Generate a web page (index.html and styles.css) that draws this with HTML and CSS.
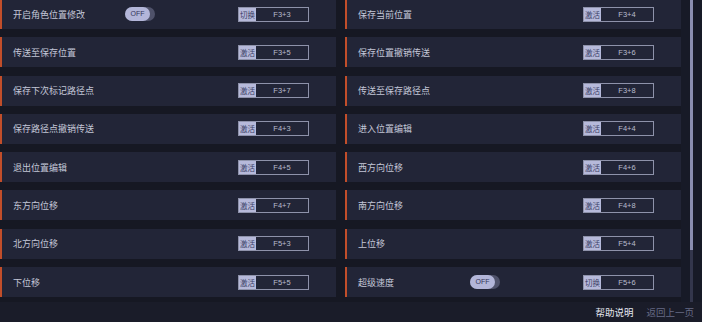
FILE: index.html
```html
<!DOCTYPE html>
<html lang="zh">
<head>
<meta charset="utf-8">
<link rel="stylesheet" href="styles.css">
</head>
<body>
<div class="screen">
  <div class="viewport">
    <div class="list">
      <div class="card"><span class="label">开启角色位置修改</span><span class="toggle"><span class="toggle-on">OFF</span></span><span class="key"><span class="key-act">切换</span><span class="key-code">F3+3</span></span></div>
      <div class="card"><span class="label">保存当前位置</span><span class="key"><span class="key-act">激活</span><span class="key-code">F3+4</span></span></div>
      <div class="card"><span class="label">传送至保存位置</span><span class="key"><span class="key-act">激活</span><span class="key-code">F3+5</span></span></div>
      <div class="card"><span class="label">保存位置撤销传送</span><span class="key"><span class="key-act">激活</span><span class="key-code">F3+6</span></span></div>
      <div class="card"><span class="label">保存下次标记路径点</span><span class="key"><span class="key-act">激活</span><span class="key-code">F3+7</span></span></div>
      <div class="card"><span class="label">传送至保存路径点</span><span class="key"><span class="key-act">激活</span><span class="key-code">F3+8</span></span></div>
      <div class="card"><span class="label">保存路径点撤销传送</span><span class="key"><span class="key-act">激活</span><span class="key-code">F4+3</span></span></div>
      <div class="card"><span class="label">进入位置编辑</span><span class="key"><span class="key-act">激活</span><span class="key-code">F4+4</span></span></div>
      <div class="card"><span class="label">退出位置编辑</span><span class="key"><span class="key-act">激活</span><span class="key-code">F4+5</span></span></div>
      <div class="card"><span class="label">西方向位移</span><span class="key"><span class="key-act">激活</span><span class="key-code">F4+6</span></span></div>
      <div class="card"><span class="label">东方向位移</span><span class="key"><span class="key-act">激活</span><span class="key-code">F4+7</span></span></div>
      <div class="card"><span class="label">南方向位移</span><span class="key"><span class="key-act">激活</span><span class="key-code">F4+8</span></span></div>
      <div class="card"><span class="label">北方向位移</span><span class="key"><span class="key-act">激活</span><span class="key-code">F5+3</span></span></div>
      <div class="card"><span class="label">上位移</span><span class="key"><span class="key-act">激活</span><span class="key-code">F5+4</span></span></div>
      <div class="card"><span class="label">下位移</span><span class="key"><span class="key-act">激活</span><span class="key-code">F5+5</span></span></div>
      <div class="card"><span class="label">超级速度</span><span class="toggle"><span class="toggle-on">OFF</span></span><span class="key"><span class="key-act">切换</span><span class="key-code">F5+6</span></span></div>
    </div>
    <div class="scrollbar"><div class="thumb"></div></div>
  </div>
  <div class="footer">
    <span class="help">帮助说明</span>
    <span class="back">返回上一页</span>
  </div>
</div>
</body>
</html>
```
FILE: styles.css
```css
html, body {
  margin: 0;
  padding: 0;
  background: #1a1c29;
}
body {
  width: 702px;
  height: 322px;
  overflow: hidden;
  font-family: "Noto Sans CJK SC", "Noto Sans", sans-serif;
}
.screen {
  display: flex;
  flex-direction: column;
  height: 322px;
}
.viewport {
  display: flex;
  height: 302px;
  overflow: hidden;
}
.list {
  display: grid;
  grid-template-columns: 336px 336px;
  grid-auto-rows: 30px;
  column-gap: 9px;
  row-gap: 8.3px;
  margin-top: -1px;
  width: 681px;
  background: #161823;
  align-content: start;
}
.card {
  display: flex;
  align-items: center;
  background: #222537;
  border-left: 2px solid #c24e2a;
  padding-left: 11px;
  padding-right: 27px;
  box-sizing: border-box;
  height: 30px;
}
.label {
  flex: 0 0 112px;
  font-size: 9px;
  color: #c4c7d8;
  white-space: nowrap;
}
.toggle {
  display: flex;
  width: 30px;
  height: 14px;
  border-radius: 7px;
  background: #4f526a;
}
.toggle-on {
  width: 25px;
  height: 14px;
  border-radius: 7px;
  background: #b3b6d9;
  color: #34375a;
  font-family: "Liberation Sans", sans-serif;
  font-size: 7px;
  line-height: 14px;
  text-align: center;
}
.key {
  margin-left: auto;
  display: flex;
  width: 71px;
  height: 15px;
  border: 1px solid #8e92aa;
  box-sizing: border-box;
}
.key-act {
  width: 17px;
  background: #b6b9da;
  color: #3c3f66;
  font-size: 7.5px;
  line-height: 13px;
  text-align: center;
  white-space: nowrap;
  overflow: hidden;
}
.key-code {
  flex: 1;
  color: #b9bccd;
  font-family: "Liberation Sans", sans-serif;
  font-size: 7.5px;
  line-height: 13px;
  text-align: center;
}
.scrollbar {
  width: 21px;
  display: flex;
  justify-content: center;
  background: #171a27;
}
.scrollbar {
  padding-left: 0;
}
.thumb {
  width: 3px;
  height: 250px;
  margin-left: 0;
  background: #8a8eb0;
  box-shadow: 0 52px 0 #33364c;
}
.footer {
  display: flex;
  justify-content: flex-end;
  align-items: center;
  gap: 13px;
  height: 20px;
  padding-right: 8px;
  font-size: 9.5px;
}
.help {
  color: #e4e6f0;
}
.back {
  color: #676b86;
}
```
